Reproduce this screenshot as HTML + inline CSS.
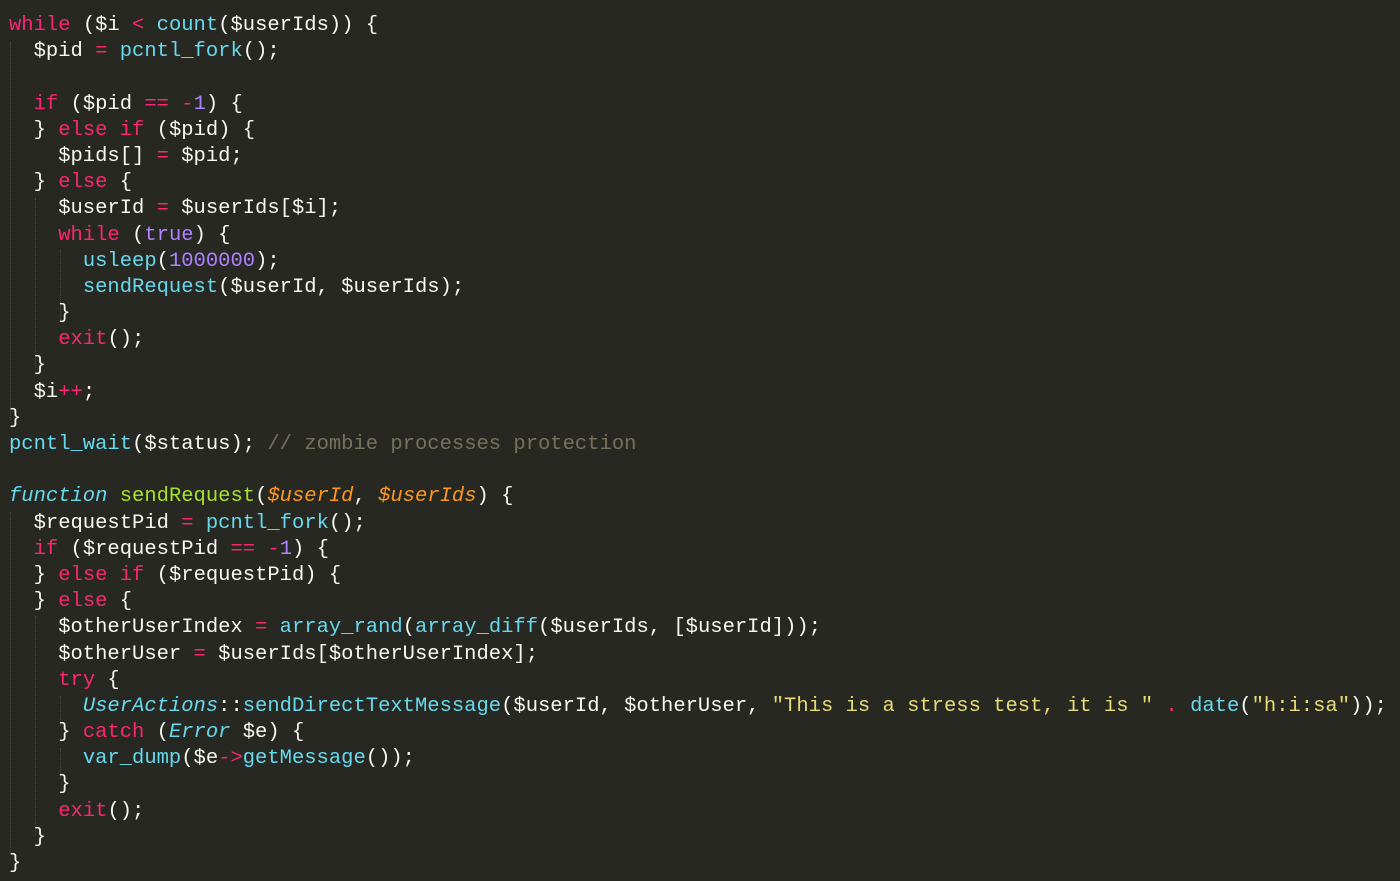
<!DOCTYPE html>
<html><head><meta charset="utf-8"><style>
html,body{margin:0;padding:0;background:#272822;width:1400px;height:881px;overflow:hidden}
pre{margin:0;padding:13px 0 0 9px;font-family:"Liberation Mono",monospace;font-size:20.5px;line-height:26.18px;color:#f8f8f2;white-space:pre;position:relative}
.k{color:#f92672}.f{color:#66d9ef}.n{color:#ae81ff}.s{color:#e6db74}.c{color:#75715e}
.p{color:#fd971f;font-style:italic}.i{color:#66d9ef;font-style:italic}
.g{position:absolute;width:0;border-left:1px dotted #4a4a42}
</style></head><body>
<div class="g" style="left:10px;top:42px;height:378px"></div>
<div class="g" style="left:35px;top:198px;height:170px"></div>
<div class="g" style="left:60px;top:250px;height:70px"></div>
<div class="g" style="left:10px;top:512px;height:340px"></div>
<div class="g" style="left:35px;top:616px;height:220px"></div>
<div class="g" style="left:60px;top:696px;height:30px"></div>
<div class="g" style="left:60px;top:748px;height:30px"></div>
<pre><span class="k">while</span> ($i <span class="k">&lt;</span> <span class="f">count</span>($userIds)) {
  $pid <span class="k">=</span> <span class="f">pcntl_fork</span>();

  <span class="k">if</span> ($pid <span class="k">==</span> <span class="k">-</span><span class="n">1</span>) {
  } <span class="k">else</span> <span class="k">if</span> ($pid) {
    $pids[] <span class="k">=</span> $pid;
  } <span class="k">else</span> {
    $userId <span class="k">=</span> $userIds[$i];
    <span class="k">while</span> (<span class="n">true</span>) {
      <span class="f">usleep</span>(<span class="n">1000000</span>);
      <span class="f">sendRequest</span>($userId, $userIds);
    }
    <span class="k">exit</span>();
  }
  $i<span class="k">++</span>;
}
<span class="f">pcntl_wait</span>($status); <span class="c">// zombie processes protection</span>

<span class="i">function</span> <span style="color:#a6e22e">sendRequest</span>(<span class="p">$userId</span>, <span class="p">$userIds</span>) {
  $requestPid <span class="k">=</span> <span class="f">pcntl_fork</span>();
  <span class="k">if</span> ($requestPid <span class="k">==</span> <span class="k">-</span><span class="n">1</span>) {
  } <span class="k">else</span> <span class="k">if</span> ($requestPid) {
  } <span class="k">else</span> {
    $otherUserIndex <span class="k">=</span> <span class="f">array_rand</span>(<span class="f">array_diff</span>($userIds, [$userId]));
    $otherUser <span class="k">=</span> $userIds[$otherUserIndex];
    <span class="k">try</span> {
      <span class="i">UserActions</span>::<span class="f">sendDirectTextMessage</span>($userId, $otherUser, <span class="s">"This is a stress test, it is "</span> <span class="k">.</span> <span class="f">date</span>(<span class="s">"h:i:sa"</span>));
    } <span class="k">catch</span> (<span class="i">Error</span> $e) {
      <span class="f">var_dump</span>($e<span class="k">-&gt;</span><span class="f">getMessage</span>());
    }
    <span class="k">exit</span>();
  }
}</pre>
</body></html>
